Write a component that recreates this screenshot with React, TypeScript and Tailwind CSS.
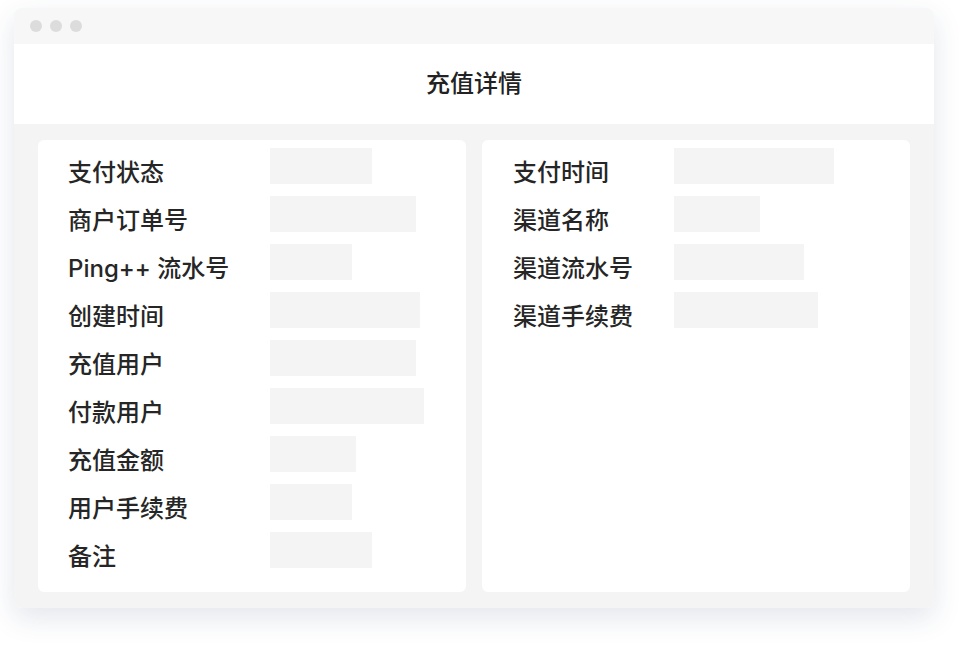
const leftRows = [
  { label: "支付状态", width: "w-[102px]" },
  { label: "商户订单号", width: "w-[146px]" },
  { label: "Ping++ 流水号", width: "w-[82px]" },
  { label: "创建时间", width: "w-[150px]" },
  { label: "充值用户", width: "w-[146px]" },
  { label: "付款用户", width: "w-[154px]" },
  { label: "充值金额", width: "w-[86px]" },
  { label: "用户手续费", width: "w-[82px]" },
  { label: "备注", width: "w-[102px]" },
];

const rightRows = [
  { label: "支付时间", width: "w-[160px]" },
  { label: "渠道名称", width: "w-[86px]" },
  { label: "渠道流水号", width: "w-[130px]" },
  { label: "渠道手续费", width: "w-[144px]" },
];

const Row = ({ label, width, labelWidth }: { label: string; width: string; labelWidth: string }) => (
  <div className="flex h-9">
    <div className={`${labelWidth} shrink-0 mt-[7px] leading-9 text-[24px] font-medium text-[#262626] whitespace-nowrap`}>
      {label}
    </div>
    <div className={`${width} h-9 bg-[#f4f4f4]`} />
  </div>
);

const App = () => {
  return (
    <div className="w-[968px] h-[648px] bg-white pt-2 pl-[14px] font-['Inter','Noto_Sans_CJK_SC',sans-serif]">
      <div className="w-[920px] rounded-lg overflow-hidden shadow-[0_10px_28px_rgba(40,60,110,0.13)]">
        <div className="h-9 bg-[#f7f7f7] flex items-center gap-2 pl-4">
          <span className="w-3 h-3 rounded-full bg-[#dcdcdc]" />
          <span className="w-3 h-3 rounded-full bg-[#dcdcdc]" />
          <span className="w-3 h-3 rounded-full bg-[#dcdcdc]" />
        </div>
        <div className="h-20 bg-white flex items-center justify-center">
          <h1 className="text-[24px] font-medium text-[#222]">充值详情</h1>
        </div>
        <div className="bg-[#f4f4f4] px-6 py-4 flex gap-4">
          <div className="w-[428px] bg-white rounded-md pt-2 pb-6 pl-[30px] flex flex-col gap-3">
            {leftRows.map((r) => (
              <Row key={r.label} label={r.label} width={r.width} labelWidth="w-[202px]" />
            ))}
          </div>
          <div className="w-[428px] bg-white rounded-md pt-2 pl-[31px] flex flex-col gap-3">
            {rightRows.map((r) => (
              <Row key={r.label} label={r.label} width={r.width} labelWidth="w-[161px]" />
            ))}
          </div>
        </div>
      </div>
    </div>
  );
};

export default App;
